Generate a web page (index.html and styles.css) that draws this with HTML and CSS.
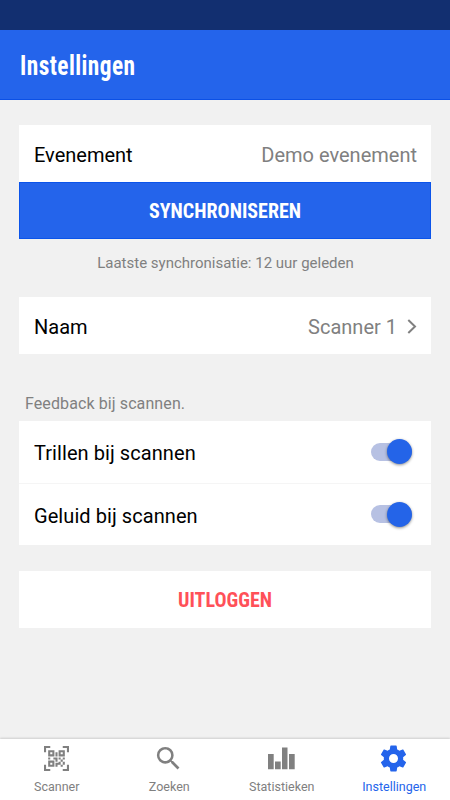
FILE: index.html
```html
<!DOCTYPE html>
<html lang="nl">
<head>
<meta charset="utf-8">
<title>Instellingen</title>
<link rel="stylesheet" href="styles.css">
</head>
<body>
<div class="status"></div>
<header class="header"><h1>Instellingen</h1></header>
<main class="content">
  <div class="row"><span>Evenement</span><span class="value">Demo evenement</span></div>
  <button class="sync">SYNCHRONISEREN</button>
  <p class="note">Laatste synchronisatie: 12 uur geleden</p>
  <div class="row name"><span>Naam</span><span class="value">Scanner 1</span>
    <svg class="chevron" width="10" height="16" viewBox="0 0 10 16"><path d="M1.3 1 8 7.5 1.3 14" fill="none" stroke="#808080" stroke-width="2"/></svg>
  </div>
  <p class="section">Feedback bij scannen.</p>
  <div class="toggles">
    <div class="toggle-row"><span>Trillen bij scannen</span><span class="switch"><span class="thumb"></span></span></div>
    <div class="toggle-row"><span>Geluid bij scannen</span><span class="switch"><span class="thumb"></span></span></div>
  </div>
  <button class="logout">UITLOGGEN</button>
</main>
<nav class="tabs">
  <a class="tab"><svg width="25" height="25" viewBox="0 0 24 24"><path d="M4,4H10V10H4V4M20,4V10H14V4H20M14,15H16V13H14V11H16V13H18V11H20V13H18V15H20V18H18V20H16V18H13V20H11V16H14V15M16,15V18H18V15H16M4,20V14H10V20H4M6,6V8H8V6H6M16,6V8H18V6H16M6,16V18H8V16H6M4,11H6V13H4V11M9,11H13V15H11V13H9V11M11,6H13V10H11V6M2,2V6H0V0H6V2H2M24,0V6H22V2H18V0H24M2,18V22H6V24H0V18H2M22,22V18H24V24H18V22H22Z"/></svg><span>Scanner</span></a>
  <a class="tab"><svg width="31" height="31" viewBox="0 0 24 24"><path d="M15.5 14h-.79l-.28-.27A6.47 6.47 0 0 0 16 9.5 6.5 6.5 0 1 0 9.5 16c1.61 0 3.09-.59 4.23-1.57l.27.28v.79l5 4.99L20.49 19l-4.99-5zm-6 0C7.01 14 5 11.99 5 9.5S7.01 5 9.5 5 14 7.01 14 9.5 11.99 14 9.5 14z"/></svg><span>Zoeken</span></a>
  <a class="tab"><svg width="27" height="23" viewBox="0 0 27 23"><path d="M0 7h5.7v15.3H0zM7 14.5h5.7v7.8H7zM14 .5h5.5v21.8H14zM21 7h5.7v15.3H21z"/></svg><span>Statistieken</span></a>
  <a class="tab active"><svg width="31" height="31" viewBox="0 0 24 24"><path d="M12,15.5A3.5,3.5 0 0,1 8.5,12A3.5,3.5 0 0,1 12,8.5A3.5,3.5 0 0,1 15.5,12A3.5,3.5 0 0,1 12,15.5M19.43,12.97C19.47,12.65 19.5,12.33 19.5,12C19.5,11.67 19.47,11.34 19.43,11L21.54,9.37C21.73,9.22 21.78,8.95 21.66,8.73L19.66,5.27C19.54,5.05 19.27,4.96 19.05,5.05L16.56,6.05C16.04,5.66 15.5,5.32 14.87,5.07L14.5,2.42C14.46,2.18 14.25,2 14,2H10C9.75,2 9.54,2.18 9.5,2.42L9.13,5.07C8.5,5.32 7.96,5.66 7.44,6.05L4.95,5.05C4.73,4.96 4.46,5.05 4.34,5.27L2.34,8.73C2.21,8.95 2.27,9.22 2.46,9.37L4.57,11C4.53,11.34 4.5,11.67 4.5,12C4.5,12.33 4.53,12.65 4.57,12.97L2.46,14.63C2.27,14.78 2.21,15.05 2.34,15.27L4.34,18.73C4.46,18.95 4.73,19.03 4.95,18.95L7.44,17.94C7.96,18.34 8.5,18.68 9.13,18.93L9.5,21.58C9.54,21.82 9.75,22 10,22H14C14.25,22 14.46,21.82 14.5,21.58L14.87,18.93C15.5,18.67 16.04,18.34 16.56,17.94L19.05,18.95C19.27,19.03 19.54,18.95 19.66,18.73L21.66,15.27C21.78,15.05 21.73,14.78 21.54,14.63L19.43,12.97Z"/></svg><span>Instellingen</span></a>
</nav>
</body>
</html>
```
FILE: styles.css
```css
* { box-sizing: border-box; margin: 0; padding: 0; }
body {
  width: 450px;
  height: 800px;
  display: flex;
  flex-direction: column;
  overflow: hidden;
  background: #f1f1f1;
  color: #000;
  font-family: Roboto, sans-serif;
  font-size: 20px;
}
.status { height: 30px; background: #122f70; }
.header {
  height: 70px;
  padding: 3px 19.5px 0;
  display: flex;
  align-items: center;
  background: #2464eb;
  border-bottom: 1px solid #0b50e6;
}
h1 {
  font-family: "Roboto Condensed", Roboto, sans-serif;
  font-size: 27px;
  font-weight: 700;
  line-height: 32px;
  letter-spacing: .5px;
  color: #fff;
  transform: scaleX(.865);
  transform-origin: left;
}
.content { flex: 1; padding: 25px 19px 0; display: flex; flex-direction: column; }
.row {
  height: 57px;
  padding: 2px 14px 0 15px;
  display: flex;
  align-items: center;
  background: #fff;
}
.row .value { margin-left: auto; color: #808080; }
.row.name { margin-top: 24px; }
.chevron { margin-left: 10px; }
button { border: 0; height: 57px; flex: none; padding-top: 1px; font: 700 20px "Roboto Condensed", Roboto, sans-serif; }
.sync { background: #2464eb; color: #fff; border: 1px solid #0b54ea; }
.note { height: 34px; padding: 14px 0 0 1px; font-size: 15px; line-height: 20px; color: #808080; text-align: center; }
.section { margin-top: 40px; height: 27px; padding-left: 6px; font-size: 16px; line-height: 20px; letter-spacing: .1px; color: #808080; }
.toggles { background: #fff; height: 124px; letter-spacing: .07px; }
.toggle-row { height: 62px; padding: 2px 19px 0 15px; display: flex; align-items: center; justify-content: space-between; }
.toggle-row + .toggle-row { border-top: 1px solid #f5f5f5; }
.switch { width: 41px; height: 18px; margin-bottom: 3px; border-radius: 9px; background: #b7c1e3; display: flex; align-items: center; justify-content: flex-end; }
.thumb { flex: none; width: 25px; height: 25px; border-radius: 50%; background: #2464e8; box-shadow: 0 1px 3px rgba(0,0,0,.45); }
.logout { margin-top: 26px; background: #fff; color: #ff5058; }
.tabs {
  height: 61px;
  display: grid;
  grid-template-columns: repeat(4, 1fr);
  background: #fff;
  box-shadow: 0 -1px 2px rgba(0,0,0,.15);
}
.tab { display: grid; grid-template-rows: 39px 18px; justify-items: center; align-items: center; color: #808080; font-size: 12.5px; line-height: 18px; }
.tab span { padding-left: 1px; }
.tab svg { fill: #808080; }
.active { color: #2464eb; }
.active svg { fill: #2464eb; }
```
